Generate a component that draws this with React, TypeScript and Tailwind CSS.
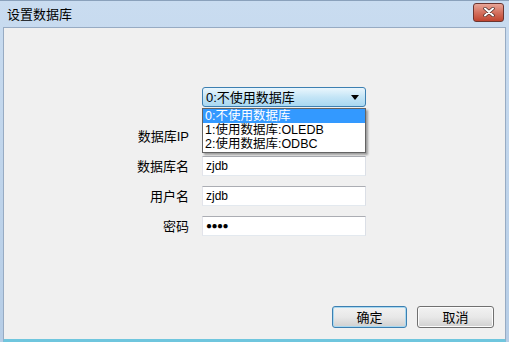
import React from 'react';

const font = { fontFamily: '"Liberation Sans", "Noto Sans CJK SC", sans-serif' };

const Field = ({ label, children }: { label: string; children?: React.ReactNode }) => (
  <div className="flex items-center h-[20px]">
    <div className="w-[186px] text-right text-[13px] text-black leading-none">{label}</div>
    <div className="ml-[13px] w-[164px] h-[20px] bg-white border border-[#abadb3] border-b-[#e3e9ef] border-l-[#e2e3ea] border-r-[#dbdfe6] flex items-center px-[3px] text-[12px] text-black">
      {children}
    </div>
  </div>
);

const App = () => {
  const options = ['0:不使用数据库', '1:使用数据库:OLEDB', '2:使用数据库:ODBC'];

  return (
    <div
      className="w-[509px] h-[342px] flex flex-col bg-gradient-to-b from-[#c9dcf0] to-[#b6cde6] border-t border-[#8aa1bb]"
      style={font}
    >
      {/* title bar */}
      <div className="h-[26px] flex items-center justify-between pl-[7px] pr-[5px]">
        <span className="text-[13px] text-black leading-none">设置数据库</span>
        <div className="w-[31px] h-[19px] -mt-[4px] rounded-[3px] border border-[#6b3530] bg-gradient-to-b from-[#e8a597] via-[#d4715f] to-[#c0432e] flex items-center justify-center">
          <svg width="12" height="10" viewBox="0 0 12 10">
            <path d="M2 1.5 L10 8.5 M10 1.5 L2 8.5" stroke="#4a2a26" strokeWidth="3.4" strokeLinecap="round" />
            <path d="M2 1.5 L10 8.5 M10 1.5 L2 8.5" stroke="#ffffff" strokeWidth="2" strokeLinecap="round" />
          </svg>
        </div>
      </div>

      {/* client area */}
      <div className="flex-1 mx-[3px] bg-[#f0f0f0] border border-[#97abc3] border-b-[3px] border-b-[#6fc6de] flex flex-col relative">
        <div className="flex flex-col pt-[59px]">
          {/* combo */}
          <div className="flex">
            <div className="ml-[198px] w-[164px] h-[20px] rounded-[3px] border border-[#3c7fb1] bg-gradient-to-b from-[#eaf6fd] via-[#c4e5f6] to-[#a9d8f2] flex items-center justify-between pl-[3px] pr-[6px]">
              <span className="text-[13px] text-black leading-none">0:不使用数据库</span>
              <svg width="8" height="5" viewBox="0 0 8 5">
                <path d="M0 0 H8 L4 5 Z" fill="#000" />
              </svg>
            </div>
          </div>

          <div className="flex flex-col gap-[10px] mt-[19px] -ml-[1px]">
            <Field label="数据库IP" />
            <Field label="数据库名">zjdb</Field>
            <Field label="用户名">zjdb</Field>
            <Field label="密码">
              <span className="text-[10px] tracking-[-0.5px] leading-none">●●●●</span>
            </Field>
          </div>
        </div>

        {/* dropdown list */}
        <div className="absolute left-[198px] top-[80px] w-[164px] h-[45px] bg-white border border-[#646464] shadow-[2px_2px_2px_rgba(0,0,0,0.35)] flex flex-col text-[12.5px] leading-none">
          {options.map((o, i) => (
            <div
              key={o}
              className={
                'h-[14px] flex items-center pl-[2px] ' +
                (i === 0 ? 'bg-[#3399ff] text-white' : 'text-black')
              }
            >
              {o}
            </div>
          ))}
        </div>

        {/* buttons */}
        <div className="mt-auto flex justify-end gap-[10px] pr-[11px] pb-[11px]">
          <button className="w-[75px] h-[22px] rounded-[3px] border border-[#3c7fb1] bg-gradient-to-b from-[#f2f2f2] via-[#e8e8e8] to-[#d0d0d0] shadow-[inset_0_0_0_1px_#a8d8f0] text-[13px] text-black leading-none">
            确定
          </button>
          <button className="w-[77px] h-[22px] rounded-[3px] border border-[#707070] bg-gradient-to-b from-[#f2f2f2] via-[#e8e8e8] to-[#d0d0d0] shadow-[inset_0_0_0_1px_#fcfcfc] text-[13px] text-black leading-none">
            取消
          </button>
        </div>
      </div>
    </div>
  );
};

export default App;
